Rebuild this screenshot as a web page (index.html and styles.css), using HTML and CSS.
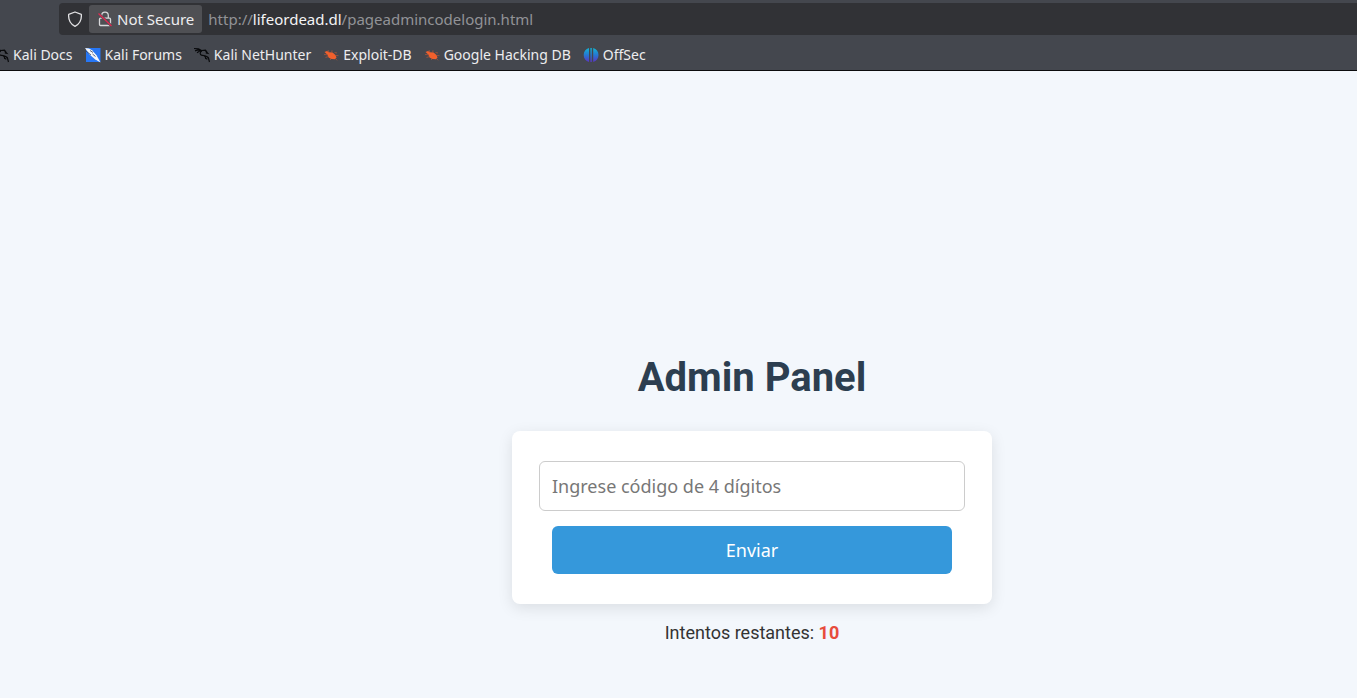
FILE: index.html
```html
<!DOCTYPE html>
<html lang="es">
<head>
<meta charset="utf-8">
<title>Admin Panel</title>
<link rel="stylesheet" href="styles.css">
</head>
<body>
<svg class="defs" aria-hidden="true">
  <symbol id="dragon" viewBox="0 0 16 16">
    <path d="M0 1.500 4.500 1.800l3 1.700 4-.3 1.500 2M1 3.800l3-.8 3 1M3 5.800l3-2 2 .2M8 4C5.500 5 5.500 7.800 8 8.300c3 .4 5.500.5 6.500 3M14.300 10.500l1.200 4.500M10 8.800c1.300.8 1.800 1.400 1.600 2.600l1.800.8M11.500 4l2.300 2.300-2-.3" fill="none" stroke="#08090b" stroke-width="1.200"/>
  </symbol>
  <symbol id="bug" viewBox="0 0 16 16">
    <path d="M1.500 5 4 4l2 1.200 3.500.3 3 2.500 1 2.500-1.500 1.800-3.500-.3L5.500 10.500 4.300 7.500z" fill="#f2602c"/>
    <path d="M1 7.500l3.500.2M2.500 10.500l3-1M5 3l1 2.500M9 3.300l-.3 2.500M11.500 5.500l2.500.5M12.500 8.500l3 .2M12.500 11.500l1.500 1.800M7.500 11v2" fill="none" stroke="#b85536" stroke-width=".7"/>
  </symbol>
</svg>
<header class="browser">
  <div class="toolbar">
    <div class="urlbar">
      <svg class="shield" viewBox="0 0 16 16" aria-hidden="true"><path d="M8 1 14.300 3.300C14.800 8.500 12.500 13 8 15.300 3.500 13 1.200 8.500 1.700 3.300z" fill="none" stroke="#e2e2e4" stroke-width="1.300" stroke-linejoin="round"/></svg>
      <button class="identity" type="button">
        <svg class="lock" viewBox="0 0 16 16" aria-hidden="true"><path d="M4.700 7V4.500a3.300 3.300 0 0 1 6.600 0V7M3.500 7.200h9a1 1 0 0 1 1 1v5.300a1 1 0 0 1-1 1h-9a1 1 0 0 1-1-1V8.200a1 1 0 0 1 1-1z" fill="none" stroke="#d8d8da" stroke-width="1.300"/><path d="M1.500 2.500 14.500 15" stroke="#4f5054" stroke-width="2.500"/><path d="M1.500 2.500 14.500 15" stroke="#e22850" stroke-width="1.300"/></svg>
        <span>Not Secure</span>
      </button>
      <span class="address">http://<span class="host">lifeordead.dl</span>/pageadmincodelogin.html</span>
    </div>
  </div>
  <nav class="bookmarks">
    <a class="bookmark" href="#"><svg class="favicon" aria-hidden="true"><use href="#dragon"/></svg>Kali Docs</a>
    <a class="bookmark" href="#"><svg class="favicon" viewBox="0 0 16 16" aria-hidden="true"><path d="M1 1h14.500v14H1z" fill="#2777f5"/><path d="M0 1 4 1.500l3 1.700 4.500 5L15.500 15.500 10 12.300 4.500 7.500z" fill="#f4f6fa"/><path d="M1 4l5 4M5 3.500l3 2M7.500 7l3 2.500" fill="none" stroke="#31405c" stroke-width=".8"/></svg>Kali Forums</a>
    <a class="bookmark" href="#"><svg class="favicon" aria-hidden="true"><use href="#dragon"/></svg>Kali NetHunter</a>
    <a class="bookmark" href="#"><svg class="favicon" aria-hidden="true"><use href="#bug"/></svg>Exploit-DB</a>
    <a class="bookmark" href="#"><svg class="favicon" aria-hidden="true"><use href="#bug"/></svg>Google Hacking DB</a>
    <a class="bookmark" href="#"><svg class="favicon" viewBox="0 0 16 16" aria-hidden="true"><defs><linearGradient id="offsec" gradientUnits="userSpaceOnUse" x1="0" y1="1" x2="0" y2="15"><stop stop-color="#12b5d4"/><stop offset=".5" stop-color="#2678d2"/><stop offset="1" stop-color="#5935c4"/></linearGradient></defs><path d="M6 1v14C2.800 14 .7 11.500.7 8S2.800 2 6 1zM7.400 1h1.400v14H7.400zM10.200 1c3.200 1 5.300 3.500 5.300 7s-2.100 6-5.300 7z" fill="url(#offsec)"/></svg>OffSec</a>
  </nav>
</header>
<main class="page">
  <h1 class="title">Admin Panel</h1>
  <form class="card">
    <input class="code" type="text" placeholder="Ingrese código de 4 dígitos" aria-label="Código de 4 dígitos">
    <button class="submit" type="button">Enviar</button>
  </form>
  <p class="attempts">Intentos restantes: <strong class="count">10</strong></p>
</main>
</body>
</html>
```
FILE: styles.css
```css
* {
  box-sizing: border-box;
}

body {
  margin: 0;
  min-height: 100vh;
  overflow-x: hidden;
  background: #f3f7fc;
  color: #333;
  font-family: Roboto, sans-serif;
}

.defs {
  display: none;
}

.browser {
  background: #44474e;
  border-bottom: 1px solid #0c0c0e;
  color: #ededef;
  font-family: "Noto Sans", sans-serif;
  font-size: 14px;
  white-space: nowrap;
}

.toolbar {
  padding: 3px 0 0 59px;
  font-size: 15px;
}

.urlbar {
  display: flex;
  align-items: center;
  height: 32px;
  padding: 2px 0 2px 8px;
  border-radius: 4px 0 0 4px;
  background: #313236;
}

.shield,
.lock,
.favicon {
  flex: none;
  width: 16px;
  height: 16px;
}

.identity {
  display: flex;
  align-items: center;
  gap: 4px;
  height: 28px;
  margin: 0 6px;
  padding: 0 8px;
  border: 0;
  border-radius: 3px;
  background: #4f5054;
  color: inherit;
  font: inherit;
}

.address {
  color: #929296;
}

.host {
  color: #f4f4f5;
}

.bookmarks {
  display: flex;
  align-items: center;
  gap: 12px;
  height: 35px;
  margin-left: -7px;
  padding-top: 4px;
}

.bookmark {
  display: flex;
  align-items: center;
  gap: 4px;
  color: inherit;
  text-decoration: none;
}

.page {
  display: flex;
  flex-direction: column;
  align-items: center;
  padding: 283px 0 48px 147px;
}

.title {
  margin: 0 0 29px;
  color: #2c3e50;
  font-size: 40px;
  line-height: 48px;
}

.card {
  display: flex;
  flex-direction: column;
  align-items: center;
  gap: 15px;
  width: 100%;
  max-width: 480px;
  padding: 30px 27px;
  border-radius: 8px;
  background: #fff;
  box-shadow: 0 4px 15px rgba(0, 0, 0, 0.1);
}

.code {
  width: 100%;
  height: 50px;
  padding: 0 12px;
  border: 1px solid #ccc;
  border-radius: 6px;
  background: #fff;
  color: #333;
  font: 18px "Noto Sans", sans-serif;
}

.code::placeholder {
  color: #777;
}

.submit {
  width: 400px;
  max-width: 100%;
  height: 48px;
  border: 0;
  border-radius: 6px;
  background: #3598db;
  color: #fff;
  font: 18px "Noto Sans", sans-serif;
}

.attempts {
  margin: 18px 0 0;
  font-size: 18px;
  line-height: 22px;
}

.count {
  color: #e74c3c;
}
```
